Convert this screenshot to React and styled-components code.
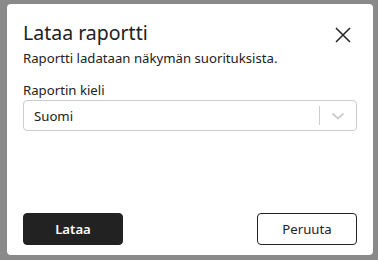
import React from "react";
import styled, { createGlobalStyle } from "styled-components";

const GlobalStyle = createGlobalStyle`
  html, body {
    margin: 0;
    padding: 0;
    background: #8a8a8a;
    font-family: "Noto Sans", "DejaVu Sans", sans-serif;
  }
`;

const Backdrop = styled.div`
  width: 378px;
  height: 260px;
  padding: 4px 5px 5px 7px;
  box-sizing: border-box;
`;

const Modal = styled.div`
  height: 251px;
  background: #fff;
  border-radius: 4px;
  display: flex;
  flex-direction: column;
  padding: 17px 16px 10px 16px;
  box-sizing: border-box;
  color: #212121;
`;

const Header = styled.div`
  display: flex;
  align-items: flex-start;
  justify-content: space-between;
`;

const Title = styled.h2`
  margin: 0;
  font-size: 19.5px;
  font-weight: 400;
  line-height: 24px;
`;

const CloseButton = styled.button`
  border: none;
  background: none;
  padding: 0;
  margin: 6px 6px 0 0;
  width: 16px;
  height: 16px;
  display: flex;
  cursor: pointer;
`;

const Subtitle = styled.p`
  margin: 4px 0 0 0;
  font-size: 13.2px;
  line-height: 18px;
`;

const Field = styled.div`
  margin-top: 14px;
  display: flex;
  flex-direction: column;
`;

const Label = styled.label`
  font-size: 13.2px;
  line-height: 18px;
`;

const Select = styled.div`
  margin-top: 1px;
  height: 31px;
  border: 1px solid #cccccc;
  border-radius: 4px;
  box-sizing: border-box;
  display: flex;
  align-items: center;
  padding-left: 10px;
  font-size: 13.2px;
`;

const Value = styled.span`
  flex: 1;
`;

const Separator = styled.span`
  width: 1px;
  height: 19px;
  background: #cccccc;
`;

const Chevron = styled.span`
  width: 36px;
  display: flex;
  justify-content: center;
`;

const Footer = styled.div`
  margin-top: auto;
  display: flex;
  justify-content: space-between;
`;

const Button = styled.button`
  width: 100px;
  height: 32px;
  border-radius: 4px;
  box-sizing: border-box;
  font-family: inherit;
  font-size: 13.2px;
  cursor: pointer;
  border: 1px solid #222;
  background: ${(p) => (p.$primary ? "#222222" : "#fff")};
  color: ${(p) => (p.$primary ? "#fff" : "#222")};
  font-weight: ${(p) => (p.$primary ? 600 : 400)};
`;

export default function App() {
  return (
    <>
      <GlobalStyle />
      <Backdrop>
        <Modal>
          <Header>
            <Title>Lataa raportti</Title>
            <CloseButton aria-label="Sulje">
              <svg width="16" height="16" viewBox="0 0 16 16">
                <path d="M1 1L15 15M15 1L1 15" stroke="#222" strokeWidth="1.5" />
              </svg>
            </CloseButton>
          </Header>
          <Subtitle>Raportti ladataan näkymän suorituksista.</Subtitle>
          <Field>
            <Label>Raportin kieli</Label>
            <Select>
              <Value>Suomi</Value>
              <Separator />
              <Chevron>
                <svg width="14" height="14" viewBox="0 0 14 14">
                  <path d="M1.5 4.5L7 9.5L12.5 4.5" fill="none" stroke="#cccccc" strokeWidth="1.8" />
                </svg>
              </Chevron>
            </Select>
          </Field>
          <Footer>
            <Button $primary>Lataa</Button>
            <Button>Peruuta</Button>
          </Footer>
        </Modal>
      </Backdrop>
    </>
  );
}
